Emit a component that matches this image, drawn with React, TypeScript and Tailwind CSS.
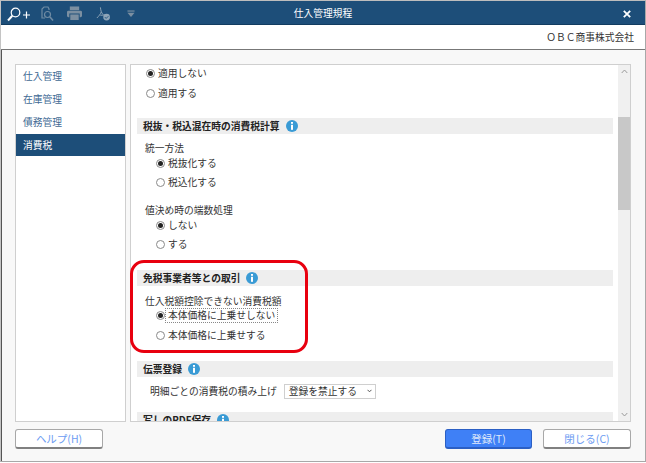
const font = { fontFamily: '"Noto Sans CJK JP", "Liberation Sans", sans-serif' };

function Info() {
  return (
    <svg width="12" height="12" viewBox="0 0 12 12" className="ml-[6px] shrink-0">
      <circle cx="6" cy="6" r="6" fill="#3a9bd5" />
      <rect x="5" y="2" width="2" height="1.8" fill="#fff" />
      <rect x="5" y="4.8" width="2" height="5" fill="#fff" />
    </svg>
  );
}

function Heading({ children, mt }: { children: string; mt: string }) {
  return (
    <div className={`${mt} ml-[6px] mr-[5px] flex h-4 shrink-0 items-center bg-[#eeeeee] pl-[6px] text-[9.75px] font-bold text-[#222]`}>
      {children}
      <Info />
    </div>
  );
}

function Radio({ label, on, focus, cls }: { label: string; on?: boolean; focus?: boolean; cls: string }) {
  return (
    <div className={`${cls} flex h-4 shrink-0 items-center text-[9.75px] text-[#333]`}>
      <span className="flex h-[9px] w-[9px] shrink-0 items-center justify-center rounded-full border border-[#8a8a8a] bg-white">
        {on && <span className="h-[5px] w-[5px] rounded-full bg-[#222]" />}
      </span>
      <span className={focus ? "border border-dotted border-[#888] px-[2px] leading-[13px]" : "ml-[3px]"}>{label}</span>
    </div>
  );
}

function Label({ children, cls }: { children: string; cls: string }) {
  return <div className={`${cls} h-4 shrink-0 text-[9.75px] leading-4 text-[#333]`}>{children}</div>;
}

function Toolbar() {
  return (
    <div className="flex items-center">
      <svg width="24" height="16" viewBox="0 0 24 16" fill="none" stroke="#fff" strokeWidth="1.2" className="ml-[6px]">
        <circle cx="8.5" cy="6.5" r="4.3" />
        <path d="M5.3 9.8 1 14.5" strokeWidth="2" />
        <path d="M16 9h7M19.5 5.5v7" />
      </svg>
      <svg width="13" height="16" viewBox="0 0 13 16" fill="none" stroke="#6f8ba3" strokeWidth="1.2" className="ml-[10px]">
        <path d="M6 1H3L1 3v9h3" />
        <path d="M6 1h1l1 2v1" />
        <circle cx="6.5" cy="8.5" r="3" />
        <path d="m9 11 3 3.5" strokeWidth="1.6" />
      </svg>
      <svg width="15" height="15" viewBox="0 0 16 15" className="ml-[13px]">
        <rect x="3" y="0" width="10" height="4" fill="#7b8fa1" />
        <rect x="0" y="4.5" width="16" height="7" rx="1.5" fill="#7b8fa1" />
        <rect x="3" y="8" width="10" height="7" fill="#7b8fa1" stroke="#1d4e79" strokeWidth="1" />
      </svg>
      <svg width="15" height="16" viewBox="0 0 17 17" fill="none" className="ml-[14px]">
        <path d="M5 1c.5 4 1 6 3 8M6 6c-1 3-3 5-5 7M5 10l5-.5" stroke="#8fa5b8" strokeWidth="1.1" />
        <circle cx="12" cy="12" r="3.8" fill="#8fa5b8" />
        <path d="m10 12 1.5 1.5 2.5-2.5" stroke="#1d4e79" strokeWidth="1" />
      </svg>
      <svg width="8" height="8" viewBox="0 0 9 8" className="ml-[16px]">
        <rect x="0.5" y="0" width="8" height="1.3" fill="#7b8fa1" />
        <path d="M.5 2.5h8L4.5 7.5z" fill="#7b8fa1" />
      </svg>
    </div>
  );
}

export default function App() {
  return (
    <div style={font} className="flex h-[463px] w-[646px] flex-col overflow-hidden bg-white">
      <div className="relative flex h-[462px] w-[646px] flex-col border border-[#a8a8a8] border-l-[#c4c4c4] border-t-[#bdbdbd] bg-[#f8f8f8]">
        {/* title bar */}
        <div className="relative flex h-6 shrink-0 items-center justify-between border-b border-[#123c60] bg-[#1d4e79] pt-[2px]">
          <Toolbar />
          <span className="absolute left-0 right-0 text-center text-[9.75px] text-white">仕入管理規程</span>
          <svg width="8" height="8" viewBox="0 0 8 8" className="mr-[14px]" stroke="#fff" strokeWidth="1.8">
            <path d="m.8.8 6.4 6.4M7.2.8.8 7.2" />
          </svg>
        </div>
        <div className="flex h-[25px] shrink-0 items-center justify-end border-b border-[#777] bg-white pr-[11px] text-[9.75px] text-[#333]">
          ＯＢＣ商事株式会社
        </div>

        {/* body */}
        <div className="flex flex-1 flex-col border-l border-[#555]">
          <div className="flex h-[372px] shrink-0 gap-[4px] pl-[13px] pr-[14px] pt-[14px]">
            <div className="flex w-[111px] shrink-0 flex-col border border-[#cfcfcf] bg-white text-[9.75px] text-[#3f6a94]">
              <div className="flex h-[23px] items-center pl-[7px]">仕入管理</div>
              <div className="flex h-[23px] items-center pl-[7px]">在庫管理</div>
              <div className="flex h-[23px] items-center pl-[7px]">債務管理</div>
              <div className="flex h-[22px] items-center bg-[#1d4e79] pl-[7px] text-white">消費税</div>
            </div>

            <div className="relative flex min-w-0 flex-1 border border-[#cfcfcf] bg-white">
              <div className="flex min-w-0 flex-1 flex-col overflow-hidden">
                <Radio cls="ml-[15px]" on label="適用しない" />
                <Radio cls="ml-[15px] mt-[4px]" label="適用する" />
                <Heading mt="mt-[17px]">税抜・税込混在時の消費税計算</Heading>
                <Label cls="ml-[14px] mt-[6px]">統一方法</Label>
                <Radio cls="ml-[25px] mt-[-1px]" on label="税抜化する" />
                <Radio cls="ml-[25px] mt-[3px]" label="税込化する" />
                <Label cls="ml-[14px] mt-[12px]">値決め時の端数処理</Label>
                <Radio cls="ml-[25px] mt-[-1px]" on label="しない" />
                <Radio cls="ml-[25px] mt-[3px]" label="する" />
                <Heading mt="mt-[18px]">免税事業者等との取引</Heading>
                <Label cls="ml-[14px] mt-[7px]">仕入税額控除できない消費税額</Label>
                <Radio cls="ml-[25px] mt-[-2px]" on focus label="本体価格に上乗せしない" />
                <Radio cls="ml-[25px] mt-[4px]" label="本体価格に上乗せする" />
                <Heading mt="mt-[18px]">伝票登録</Heading>
                <div className="ml-[19px] mt-[5px] flex h-[18px] shrink-0 items-center text-[9.75px] text-[#333]">
                  明細ごとの消費税の積み上げ
                  <span className="ml-[7px] flex h-[15px] w-[92px] items-center border border-[#cfcfcf] pl-[4px]">
                    登録を禁止する
                    <svg width="5" height="4" viewBox="0 0 5 4" fill="none" stroke="#555" className="ml-[10px]">
                      <path d="m.5.8 2 2 2-2" />
                    </svg>
                  </span>
                </div>
                <Heading mt="mt-[12px]">写しのPDF保存</Heading>
              </div>
              {/* scrollbar */}
              <div className="flex w-[12px] shrink-0 flex-col bg-[#f0f0f0]">
                <div className="flex h-[52px] shrink-0 justify-center pt-[4px]">
                  <svg width="7" height="5" viewBox="0 0 7 5" fill="none" stroke="#9a9a9a"><path d="m.7 4 2.8-3 2.8 3" /></svg>
                </div>
                <div className="h-[93px] shrink-0 bg-[#c8c8c8]" />
                <div className="flex flex-1 items-end justify-center pb-[4px]">
                  <svg width="7" height="5" viewBox="0 0 7 5" fill="none" stroke="#9a9a9a"><path d="m.7 1 2.8 3 2.8-3" /></svg>
                </div>
              </div>
            </div>
          </div>

          {/* footer */}
          <div className="flex items-start justify-between pl-[13px] pr-[14px] pt-[7px] text-[10.5px]">
            <button className="flex h-5 w-[88px] items-center justify-center rounded-[3px] border border-[#a8a8a8] border-b-2 border-b-[#808080] bg-white text-[#6d9cf2]">ヘルプ(H)</button>
            <div className="flex gap-[11px]">
              <button className="flex h-5 w-[87px] items-center justify-center rounded-[3px] border border-[#2b5fc4] border-b-2 bg-[#3f80f6] text-[#dfe9fb]">登録(T)</button>
              <button className="flex h-5 w-[88px] items-center justify-center rounded-[3px] border border-[#a8a8a8] border-b-2 border-b-[#808080] bg-white text-[#6d9cf2]">閉じる(C)</button>
            </div>
          </div>
        </div>

        {/* red callout */}
        <div className="absolute left-[129px] top-[259px] h-[93px] w-[178px] rounded-[14px] border-[3px] border-[#e8000f]" />
      </div>
    </div>
  );
}
